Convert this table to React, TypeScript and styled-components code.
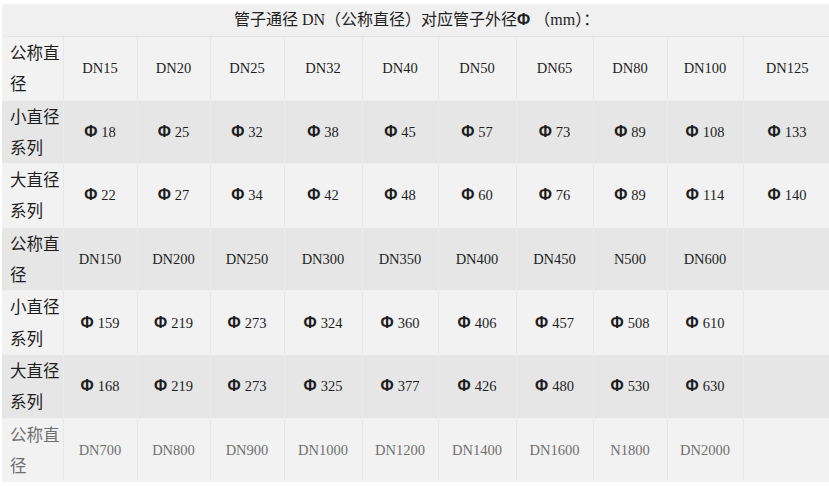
import React from "react";
import styled, { createGlobalStyle } from "styled-components";

const GlobalStyle = createGlobalStyle`
    html, body {
        margin: 0;
        padding: 0;
        background: #ffffff;
    }
    body {
        font-family: "Liberation Serif", "Noto Sans CJK SC", serif;
        color: #222;
    }
`;

const Page = styled.div`
    padding: 4px 0 0 2px;
    width: 829px;
    overflow: hidden;
`;

const Table = styled.table`
    border-collapse: collapse;
    width: 829px;
    table-layout: fixed;
    background: #f0f0f0;
`;

const Caption = styled.td`
    height: 32px;
    padding: 0;
    font-size: 16px;
    line-height: 32px;
    text-align: center;
    background: #f0f0f0;
    border-bottom: 1px solid #e3e3e3;
`;

interface IRow {
    shade: boolean;
    faded?: boolean;
}

const Row = styled.tr<IRow>`
    height: 63px;
    background: ${props => (props.shade ? "#e6e6e6" : "#f2f2f2")};
    color: ${props => (props.faded ? "#707070" : "#1e1e1e")};
    td {
        border-right: 1px solid ${props => (props.shade ? "#ebebeb" : "#e8e8e8")};
        border-bottom: 1px solid #f0f0f0;
    }
`;

const Label = styled.td`
    padding: 0 0 0 8px;
    font-size: 16.5px;
    line-height: 31.3px;
    text-align: left;
    font-family: "Noto Sans CJK SC", "Liberation Serif", sans-serif;
    font-weight: 400;
    word-break: break-all;
    overflow: hidden;
`;

const Cell = styled.td`
    padding: 0;
    font-size: 14.5px;
    line-height: 20px;
    text-align: center;
    vertical-align: middle;
    white-space: nowrap;
`;

const Phi = styled.span`
    font-family: "Liberation Sans", sans-serif;
    font-size: 16px;
    font-weight: 700;
    margin-right: 4px;
`;

const widths = [61, 74, 73, 74, 78, 76, 78, 77, 74, 76, 88];

const rows: { label: string; values: string[] }[] = [
    { label: "公称直径", values: ["DN15", "DN20", "DN25", "DN32", "DN40", "DN50", "DN65", "DN80", "DN100", "DN125"] },
    { label: "小直径系列", values: ["Φ18", "Φ25", "Φ32", "Φ38", "Φ45", "Φ57", "Φ73", "Φ89", "Φ108", "Φ133"] },
    { label: "大直径系列", values: ["Φ22", "Φ27", "Φ34", "Φ42", "Φ48", "Φ60", "Φ76", "Φ89", "Φ114", "Φ140"] },
    { label: "公称直径", values: ["DN150", "DN200", "DN250", "DN300", "DN350", "DN400", "DN450", "N500", "DN600", ""] },
    { label: "小直径系列", values: ["Φ159", "Φ219", "Φ273", "Φ324", "Φ360", "Φ406", "Φ457", "Φ508", "Φ610", ""] },
    { label: "大直径系列", values: ["Φ168", "Φ219", "Φ273", "Φ325", "Φ377", "Φ426", "Φ480", "Φ530", "Φ630", ""] },
    { label: "公称直径", values: ["DN700", "DN800", "DN900", "DN1000", "DN1200", "DN1400", "DN1600", "N1800", "DN2000", ""] }
];

const Value = ({ text }: { text: string }) =>
    text.startsWith("Φ") ? (
        <>
            <Phi>Φ</Phi>
            {text.slice(1)}
        </>
    ) : (
        <>{text}</>
    );

const App = () => {
    return (
        <Page>
            <GlobalStyle />
            <Table>
                <colgroup>
                    {widths.map((w, i) => (
                        <col key={i} style={{ width: w }} />
                    ))}
                </colgroup>
                <tbody>
                    <tr>
                        <Caption colSpan={11}>
                            管子通径 DN（公称直径）对应管子外径<Phi>Φ</Phi>（mm）：
                        </Caption>
                    </tr>
                    {rows.map((row, r) => (
                        <Row key={r} shade={r % 2 === 1} faded={r === rows.length - 1}>
                            <Label>{row.label}</Label>
                            {row.values.map((v, c) => (
                                <Cell key={c}>
                                    <Value text={v} />
                                </Cell>
                            ))}
                        </Row>
                    ))}
                </tbody>
            </Table>
        </Page>
    );
};

export default App;
